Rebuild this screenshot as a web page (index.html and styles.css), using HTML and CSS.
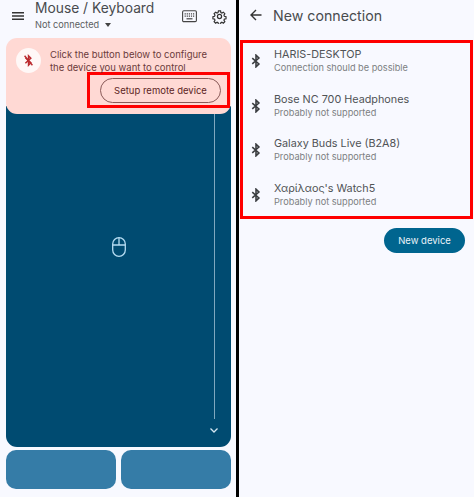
FILE: index.html
```html
<!DOCTYPE html>
<html lang="en">
<head>
	<meta charset="UTF-8">
	<title>Mouse / Keyboard</title>
	<link rel="stylesheet" href="styles.css">
</head>
<body>
	<div class="screens">
		<div class="screen left">
			<div class="topbar">
				<svg class="menu" width="24" height="24" viewBox="0 0 24 24"><path d="M6 8h12v1.5H6zM6 11.3h12v1.5H6zM6 14.6h12v1.5H6z"/></svg>
				<div class="title">
					<div class="name">Mouse / Keyboard</div>
					<div class="status">Not connected <span class="caret"></span></div>
				</div>
				<svg class="kb" width="15" height="13" viewBox="0 0 15 13" fill="none" stroke="#444"><rect x=".6" y=".8" width="13.8" height="10.8" rx="1.2" stroke-width="1.1"/><path d="M2.6 3.8h10M2.6 6.1h10" stroke-width="1.2" stroke-dasharray="1.2 .9"/><path d="M4.5 8.8h6" stroke-width="1.2"/></svg>
				<svg class="gear" width="15" height="15" viewBox="0 0 24 24" fill="none" stroke="#333" stroke-width="2"><path d="M10.2 2.5h3.6l.5 2.9 1.7.8 2.5-1.5 2.5 2.6-1.5 2.4.7 1.8 2.8.7v3.6l-2.8.6-.7 1.8 1.5 2.5-2.5 2.5-2.5-1.5-1.7.7-.5 2.9h-3.6l-.6-2.9-1.7-.7-2.4 1.5-2.6-2.5 1.5-2.5-.7-1.8-2.8-.6v-3.6l2.8-.7.7-1.8-1.5-2.4 2.6-2.6 2.4 1.5 1.7-.8z" transform="translate(.6 .6) scale(.95)"/><circle cx="12" cy="12" r="3.3"/></svg>
			</div>
			<div class="banner">
				<div class="bannerrow">
					<div class="bticon">
						<svg width="11" height="13" viewBox="0 0 14 16" fill="none" stroke="#bb2a2e" stroke-width="1.8"><path d="M3 4.5l7 6.5-3 3V2l3 3-7 6.5"/><path d="M2 2l10 12" stroke-width="1.8"/></svg>
					</div>
					<p class="bannertext">Click the button below to configure the device you want to control</p>
				</div>
				<div class="setupwrap"><div class="setup">Setup remote device</div></div>
			</div>
			<div class="pad">
				<svg class="mouse" width="14" height="20" viewBox="0 0 14 20" fill="none" stroke="#b5dcf2" stroke-width="1.3"><rect x=".7" y=".7" width="12.6" height="18.6" rx="6.3"/><path d="M.7 8h12.6M7 .7V8"/></svg>
				<div class="scroll">
					<div class="scrollline"></div>
					<svg width="10" height="7" viewBox="0 0 10 7" fill="none" stroke="#d4e6f1" stroke-width="1.3"><path d="M1.5 1.5L5 5l3.5-3.5"/></svg>
				</div>
			</div>
			<div class="buttons">
				<div class="mbtn"></div>
				<div class="mbtn"></div>
			</div>
		</div>
		<div class="screen right">
			<div class="rtop">
				<svg width="14" height="14" viewBox="0 0 14 14" fill="none" stroke="#333" stroke-width="1.4"><path d="M12.5 7H2M7 2L2 7l5 5"/></svg>
				<div class="rtitle">New connection</div>
			</div>
			<ul class="devices">
				<li class="device">
					<svg class="bt" width="10" height="14" viewBox="0 0 12 16" fill="none" stroke="#3a3d40" stroke-width="1.9"><path d="M1.5 4.5l8 7-3.5 3.5V1l3.5 3.5-8 7"/></svg>
					<div><div class="dname">HARIS-DESKTOP</div><div class="dsub">Connection should be possible</div></div>
				</li>
				<li class="device">
					<svg class="bt" width="10" height="14" viewBox="0 0 12 16" fill="none" stroke="#3a3d40" stroke-width="1.9"><path d="M1.5 4.5l8 7-3.5 3.5V1l3.5 3.5-8 7"/></svg>
					<div><div class="dname">Bose NC 700 Headphones</div><div class="dsub">Probably not supported</div></div>
				</li>
				<li class="device">
					<svg class="bt" width="10" height="14" viewBox="0 0 12 16" fill="none" stroke="#3a3d40" stroke-width="1.9"><path d="M1.5 4.5l8 7-3.5 3.5V1l3.5 3.5-8 7"/></svg>
					<div><div class="dname">Galaxy Buds Live (B2A8)</div><div class="dsub">Probably not supported</div></div>
				</li>
				<li class="device">
					<svg class="bt" width="10" height="14" viewBox="0 0 12 16" fill="none" stroke="#3a3d40" stroke-width="1.9"><path d="M1.5 4.5l8 7-3.5 3.5V1l3.5 3.5-8 7"/></svg>
					<div><div class="dname">Χαρίλαος's Watch5</div><div class="dsub">Probably not supported</div></div>
				</li>
			</ul>
			<div class="newrow"><div class="newbtn">New device</div></div>
		</div>
	</div>
</body>
</html>
```

FILE: styles.css
```css
*{
	margin: 0;
	padding: 0;
	box-sizing: border-box;
}
html,body{
	height: 100%;
	background-color: #000;
}
body{
	font-family: "Inter", "Noto Sans", sans-serif;
	color: #44474a;
}
.screens{
	display: flex;
	gap: 3px;
	width: 474px;
	height: 497px;
}
.screen{
	background-color: #f8f9ff;
	height: 100%;
}
.left{
	width: 236px;
	padding: 0 5px 0 6px;
	display: flex;
	flex-direction: column;
}
.right{
	width: 235px;
	padding: 0 1px;
}
.topbar{
	display: flex;
	align-items: center;
	height: 38px;
	padding-bottom: 6px;
	flex-shrink: 0;
}
.menu{
	fill: #333;
	margin: 0 5px 0 0;
}
.title{
	flex: 1;
}
.name{
	font-size: 13.8px;
	line-height: 16px;
	color: #484b4e;
}
.status{
	font-size: 9.2px;
	line-height: 17px;
	color: #5c5f62;
}
.caret{
	display: inline-block;
	width: 0;
	height: 0;
	border: 3.5px solid transparent;
	border-top: 4px solid #444;
	border-bottom: 0;
	margin: 0 0 1px 3px;
}
.kb{
	margin-right: 15px;
}
.gear{
	margin-right: 4px;
}
.banner{
	background-color: #ffd9d4;
	border-radius: 11px;
	height: 76px;
	position: relative;
	z-index: 1;
	flex-shrink: 0;
	padding: 10px 1px 0 10px;
}
.bannerrow{
	display: flex;
	gap: 9px;
}
.bticon{
	width: 25px;
	height: 25px;
	border-radius: 50%;
	background-color: #fff8f7;
	display: flex;
	align-items: center;
	justify-content: center;
	flex-shrink: 0;
}
.bannertext{
	font-size: 9.5px;
	line-height: 13px;
	color: #6b3b3b;
	width: 165px;
}
.setupwrap{
	border: 3px solid #f00;
	width: 143px;
	height: 36px;
	margin: -2px 0 0 auto;
	padding-right: 6px;
	display: flex;
	align-items: center;
	justify-content: flex-end;
}
.setup{
	width: 121px;
	height: 25px;
	border: 1px solid #8a5a58;
	border-radius: 13px;
	text-align: center;
	font-size: 9.5px;
	line-height: 23px;
	color: #5c1f1f;
}
.pad{
	flex: 1;
	margin-top: -8px;
	min-height: 0;
	padding-bottom: 60px;
	background-color: #004b71;
	border-radius: 0 0 11px 11px;
	display: flex;
	align-items: center;
	justify-content: center;
	position: relative;
}
.scroll{
	position: absolute;
	right: 12px;
	top: 0;
	bottom: 13px;
	display: flex;
	flex-direction: column;
	align-items: center;
	gap: 8px;
}
.scrollline{
	flex: 1;
	width: 1px;
	background-color: #7fa8bf;
}
.buttons{
	display: flex;
	gap: 5px;
	margin: 3px 0 8px;
	height: 39px;
	flex-shrink: 0;
}
.mbtn{
	flex: 1;
	background-color: #357ca7;
	border-radius: 10px;
}
.rtop{
	display: flex;
	align-items: center;
	height: 30px;
	margin-bottom: 10px;
	padding-left: 9px;
	gap: 10px;
}
.rtitle{
	font-size: 14.2px;
	color: #484b4e;
}
.devices{
	list-style: none;
	border: 3px solid #f00;
	height: 179px;
	padding-top: 3px;
	display: flex;
	flex-direction: column;
	gap: 14.6px;
}
.device{
	display: flex;
	align-items: center;
	height: 30px;
	padding-left: 8px;
	gap: 13px;
}
.dname{
	font-size: 10.8px;
	line-height: 13px;
	color: #505356;
}
.dsub{
	font-size: 9.2px;
	line-height: 13px;
	color: #7c7f82;
}
.newrow{
	display: flex;
	justify-content: flex-end;
	padding: 9px 8px 0 0;
}
.newbtn{
	width: 81px;
	height: 25px;
	border-radius: 13px;
	background-color: #00658f;
	color: #e8f2f8;
	font-size: 9.5px;
	line-height: 25px;
	text-align: center;
}
```
